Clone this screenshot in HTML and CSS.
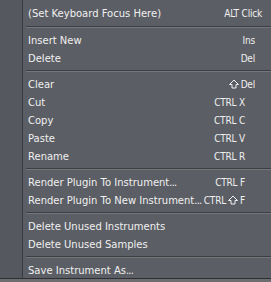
FILE: index.html
```html
<!DOCTYPE html>
<html lang="en">
<head>
    <meta charset="UTF-8">
    <title>Instrument Menu</title>
    <link rel="stylesheet" href="styles.css">
</head>
<body>
    <div class="menu">
        <div class="gutter"></div>
        <div class="items">
            <div class="item"><span>(Set Keyboard Focus Here)</span><span class="key">ALT Click</span></div>
            <div class="sep first"></div>
            <div class="item"><span>Insert New</span><span class="key short">Ins</span></div>
            <div class="item"><span>Delete</span><span class="key short">Del</span></div>
            <div class="sep"></div>
            <div class="item"><span>Clear</span><span class="key short"><svg class="shift" viewBox="0 0 10 10"><path d="M5 1 L9.5 5.5 L7 5.5 L7 9 L3 9 L3 5.5 L0.5 5.5 Z"/></svg> Del</span></div>
            <div class="item"><span>Cut</span><span class="key ctrl">CTRL X</span></div>
            <div class="item"><span>Copy</span><span class="key ctrl">CTRL C</span></div>
            <div class="item"><span>Paste</span><span class="key ctrl">CTRL V</span></div>
            <div class="item"><span>Rename</span><span class="key ctrl">CTRL R</span></div>
            <div class="sep"></div>
            <div class="item"><span>Render Plugin To Instrument<span class="dots">...</span></span><span class="key ctrl">CTRL F</span></div>
            <div class="item"><span>Render Plugin To New Instrument<span class="dots">...</span></span><span class="key ctrl">CTRL<svg class="shift" viewBox="0 0 10 10"><path d="M5 1 L9.5 5.5 L7 5.5 L7 9 L3 9 L3 5.5 L0.5 5.5 Z"/></svg>F</span></div>
            <div class="sep"></div>
            <div class="item"><span>Delete Unused Instruments</span></div>
            <div class="item"><span>Delete Unused Samples</span></div>
            <div class="sep"></div>
            <div class="item"><span>Save Instrument As<span class="dots">...</span></span></div>
        </div>
    </div>
</body>
</html>
```

FILE: styles.css
```css
body {
    margin: 0;
    background-color: #6b6d71;
    font-family: "DejaVu Sans", sans-serif;
}
.menu {
    display: flex;
    width: 271px;
    height: 279px;
    background-color: #5b5e64;
    border-bottom: 1px solid #2e3033;
    box-sizing: border-box;
}
.gutter {
    flex: 0 0 22px;
    background-color: #55585f;
    border-right: 1px solid #3a3c41;
}
.items {
    flex: 1;
    min-width: 0;
    padding: 4px 3px 0 3px;
}
.item {
    display: flex;
    justify-content: space-between;
    align-items: center;
    height: 18px;
    padding: 0 6px 0 2px;
    font-size: 10px;
    color: #f0f0f0;
    white-space: nowrap;
}
.dots {
    letter-spacing: -0.8px;
}
.key {
    display: flex;
    align-items: center;
    font-family: "DejaVu Sans Condensed", sans-serif;
    font-size: 10px;
    letter-spacing: -0.2px;
}
.key.short {
    margin-right: 7px;
}
.key.ctrl {
    margin-right: 17px;
}
.shift {
    width: 10px;
    height: 10px;
    fill: none;
    stroke: #f0f0f0;
    stroke-width: 1;
    margin: 0 2px;
}
.sep {
    height: 8px;
    display: flex;
    align-items: center;
    margin-right: -3px;
}
.sep.first {
    height: 9px;
}
.sep::before {
    content: "";
    flex: 1;
    height: 1px;
    background-color: #3c3e42;
    border-bottom: 1px solid #74777c;
}
```
